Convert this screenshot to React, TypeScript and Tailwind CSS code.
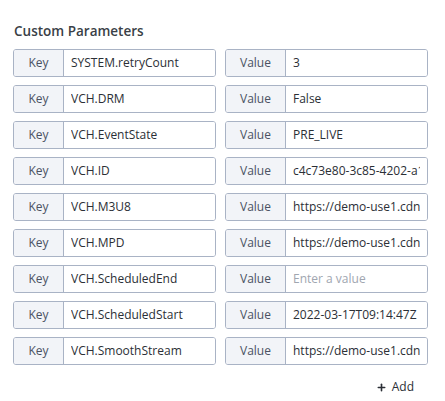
import { Plus } from "lucide-react";

const params = [
  { key: "SYSTEM.retryCount", value: "3" },
  { key: "VCH.DRM", value: "False" },
  { key: "VCH.EventState", value: "PRE_LIVE" },
  { key: "VCH.ID", value: "c4c73e80-3c85-4202-a1b2-9f1e0c7d5a33" },
  { key: "VCH.M3U8", value: "https://demo-use1.cdn.example.com/live/master.m3u8" },
  { key: "VCH.MPD", value: "https://demo-use1.cdn.example.com/live/manifest.mpd" },
  { key: "VCH.ScheduledEnd", value: "" },
  { key: "VCH.ScheduledStart", value: "2022-03-17T09:14:47Z" },
  { key: "VCH.SmoothStream", value: "https://demo-use1.cdn.example.com/live/Manifest" },
];

function Field({ label, value, labelWidth, placeholder }: { label: string; value: string; labelWidth: string; placeholder?: string }) {
  return (
    <div className="flex h-[28px] flex-1 min-w-0 rounded-[3px] border border-[#a9b3c5] overflow-hidden">
      <div
        className={`${labelWidth} shrink-0 flex items-center justify-center bg-[#f2f4f8] border-r border-[#a9b3c5] text-[12px] text-[#4a5263]`}
      >
        {label}
      </div>
      <input
        readOnly
        value={value}
        placeholder={placeholder}
        className="flex-1 min-w-0 px-[7px] bg-white text-[12px] text-[#2b2f36] placeholder:text-[#a0a6b0] outline-none"
      />
    </div>
  );
}

export default function App() {
  return (
    <div className="w-[445px] h-[401px] bg-white pl-[13px] pr-[17px] pt-[21px]" style={{ fontFamily: '"Open Sans", sans-serif' }}>
      <h3 className="text-[13.5px] font-semibold text-[#3a3f47] leading-[20px] pl-px">Custom Parameters</h3>
      <div className="mt-[8px] flex flex-col gap-[8px]">
        {params.map((p) => (
          <div key={p.key} className="flex gap-[9px]">
            <Field label="Key" value={p.key} labelWidth="w-[50px]" />
            <Field label="Value" value={p.value} labelWidth="w-[60px]" placeholder="Enter a value" />
          </div>
        ))}
      </div>
      <div className="flex justify-end mt-[13px] pr-[14px]">
        <button className="flex items-center gap-[5px] text-[12px] text-[#2b2f36]">
          <Plus className="w-[11px] h-[11px]" strokeWidth={3.5} />
          Add
        </button>
      </div>
    </div>
  );
}
